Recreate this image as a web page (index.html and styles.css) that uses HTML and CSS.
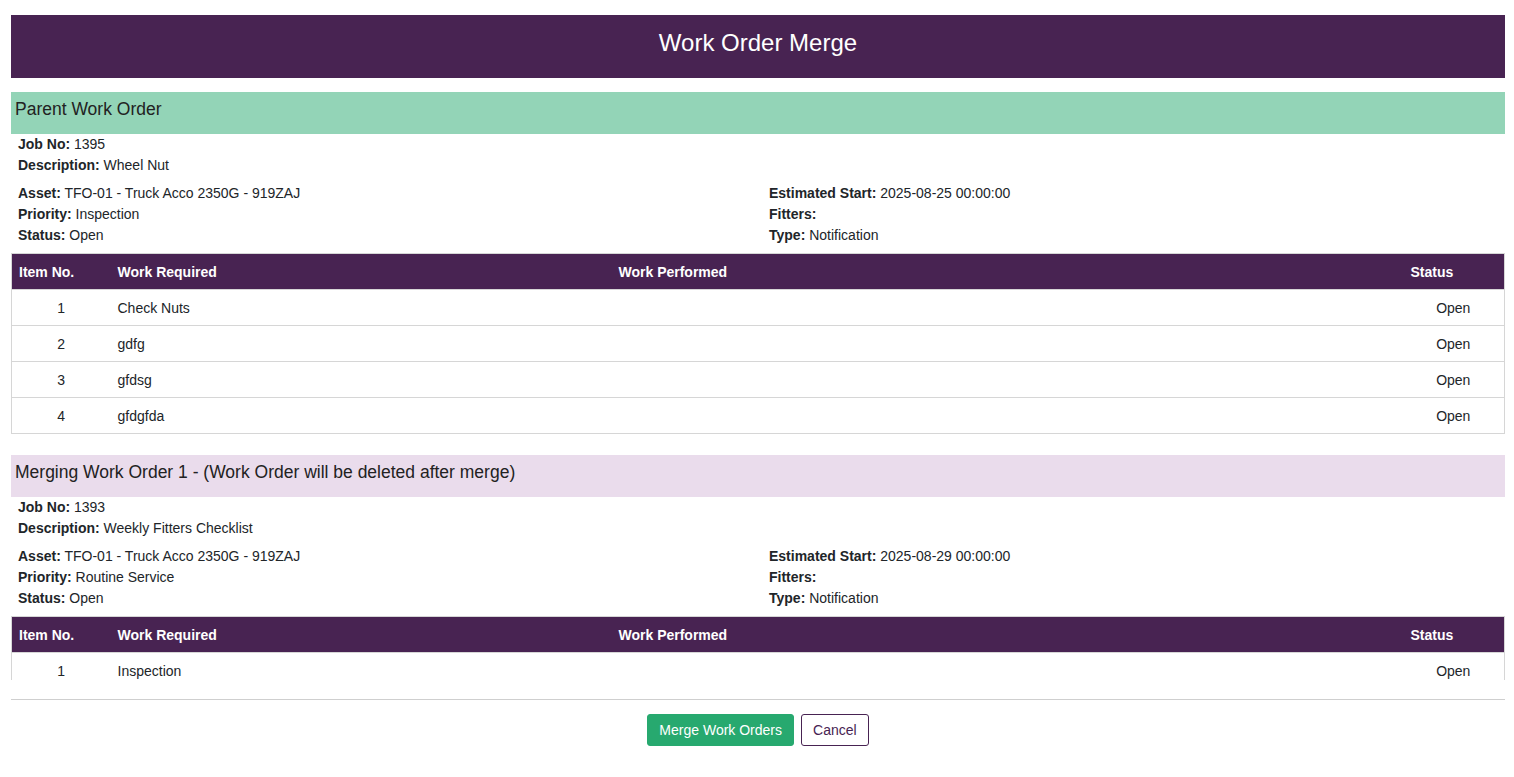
FILE: index.html
```html
<!DOCTYPE html>
<html lang="en">
<head>
    <meta charset="UTF-8">
    <meta name="viewport" content="width=device-width, initial-scale=1.0">
    <title>Work Order Merge</title>
    <link rel="stylesheet" href="styles.css">
</head>
<body>
    <div class="page">
        <h1 class="page-title">Work Order Merge</h1>

        <div class="merge-body">
            <!-- Parent -->
            <section class="order">
                <h2 class="order-title parent">Parent Work Order</h2>
                <div class="order-info">
                    <p><b>Job No:</b> 1395</p>
                    <p><b>Description:</b> Wheel Nut</p>
                </div>
                <div class="order-grid">
                    <div>
                        <p><b>Asset:</b> TFO-01 - Truck Acco 2350G - 919ZAJ</p>
                        <p><b>Priority:</b> Inspection</p>
                        <p><b>Status:</b> Open</p>
                    </div>
                    <div>
                        <p><b>Estimated Start:</b> 2025-08-25 00:00:00</p>
                        <p><b>Fitters:</b></p>
                        <p><b>Type:</b> Notification</p>
                    </div>
                </div>
                <table class="items">
                    <colgroup>
                        <col class="col-no">
                        <col class="col-req">
                        <col class="col-perf">
                        <col class="col-status">
                    </colgroup>
                    <thead>
                        <tr><th>Item No.</th><th>Work Required</th><th>Work Performed</th><th>Status</th></tr>
                    </thead>
                    <tbody>
                        <tr><td class="center">1</td><td>Check Nuts</td><td></td><td class="center">Open</td></tr>
                        <tr><td class="center">2</td><td>gdfg</td><td></td><td class="center">Open</td></tr>
                        <tr><td class="center">3</td><td>gfdsg</td><td></td><td class="center">Open</td></tr>
                        <tr><td class="center">4</td><td>gfdgfda</td><td></td><td class="center">Open</td></tr>
                    </tbody>
                </table>
            </section>

            <!-- Merging -->
            <section class="order">
                <h2 class="order-title merging">Merging Work Order 1 - (Work Order will be deleted after merge)</h2>
                <div class="order-info">
                    <p><b>Job No:</b> 1393</p>
                    <p><b>Description:</b> Weekly Fitters Checklist</p>
                </div>
                <div class="order-grid">
                    <div>
                        <p><b>Asset:</b> TFO-01 - Truck Acco 2350G - 919ZAJ</p>
                        <p><b>Priority:</b> Routine Service</p>
                        <p><b>Status:</b> Open</p>
                    </div>
                    <div>
                        <p><b>Estimated Start:</b> 2025-08-29 00:00:00</p>
                        <p><b>Fitters:</b></p>
                        <p><b>Type:</b> Notification</p>
                    </div>
                </div>
                <table class="items">
                    <colgroup>
                        <col class="col-no">
                        <col class="col-req">
                        <col class="col-perf">
                        <col class="col-status">
                    </colgroup>
                    <thead>
                        <tr><th>Item No.</th><th>Work Required</th><th>Work Performed</th><th>Status</th></tr>
                    </thead>
                    <tbody>
                        <tr><td class="center">1</td><td>Inspection</td><td></td><td class="center">Open</td></tr>
                    </tbody>
                </table>
            </section>
        </div>

        <div class="actions">
            <button type="button" class="btn btn-merge">Merge Work Orders</button>
            <button type="button" class="btn btn-cancel">Cancel</button>
        </div>
    </div>
</body>
</html>
```

FILE: styles.css
```css
body {
    margin: 0;
    font-family: "Liberation Sans", Arial, Helvetica, sans-serif;
    color: #212529;
    background: #fff;
}

.page {
    padding: 15px 9px 0 11px;
}

.page-title {
    margin: 0;
    height: 63px;
    line-height: 56px;
    background-color: #482352;
    color: #fff;
    font-size: 24px;
    font-weight: normal;
    text-align: center;
}

.merge-body {
    margin-top: 14px;
    height: 588px;
    overflow-y: auto;
    scrollbar-width: none;
}

.order {
    margin-bottom: 21px;
}

.order-title {
    margin: 0;
    height: 42px;
    line-height: 34px;
    padding: 0 4px;
    font-size: 17.5px;
    font-weight: normal;
    color: #222;
}

.order-title.parent {
    background-color: #93d4b7;
}

.order-title.merging {
    background-color: #eadcec;
}

.order-info,
.order-grid {
    padding: 0 7px;
    font-size: 14px;
}

.order-info p,
.order-grid p {
    margin: 0;
    line-height: 21px;
}

.order-grid {
    display: grid;
    grid-template-columns: 1fr 1fr;
    column-gap: 22px;
    margin-top: 7px;
}

.items {
    width: 100%;
    margin-top: 7px;
    border-collapse: collapse;
    table-layout: fixed;
    font-size: 14px;
    border: 1px solid #d6d6d6;
}

.col-no { width: 99px; }
.col-req { width: 501px; }
.col-status { width: 102px; }

.items th {
    background-color: #482352;
    color: #fff;
    text-align: left;
    font-weight: bold;
    padding: 0 7px;
    height: 35px;
}

.items th:last-child {
    padding-left: 8px;
}

.items td {
    padding: 0 7px;
    height: 35px;
    border-top: 1px solid #d6d6d6;
}

.items td.center {
    text-align: center;
}

.actions {
    margin-top: 19px;
    border-top: 1px solid #cfcfcf;
    padding-top: 14px;
    display: flex;
    justify-content: center;
    gap: 7px;
}

.btn {
    font-family: inherit;
    font-size: 14px;
    height: 32px;
    padding: 0 11px;
    border-radius: 3px;
    cursor: pointer;
}

.btn-merge {
    background-color: #27a96f;
    border: 1px solid #27a96f;
    color: #fff;
}

.btn-cancel {
    background: #fff;
    border: 1px solid #482352;
    color: #482352;
}
```
